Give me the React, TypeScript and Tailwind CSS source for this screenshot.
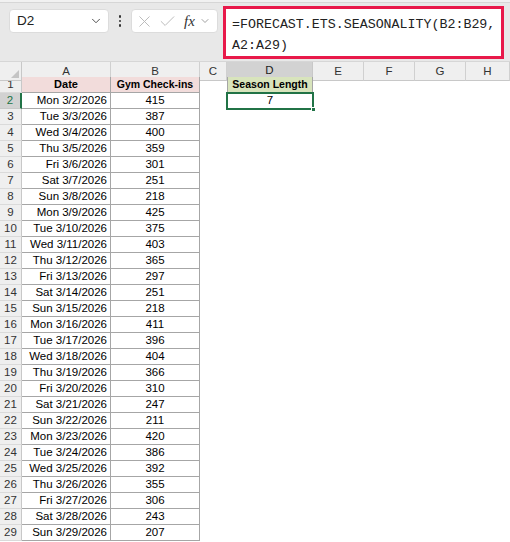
import { ChevronDown, X, Check } from 'lucide-react';

const rows: [string, number][] = [
  ['Mon 3/2/2026', 415],
  ['Tue 3/3/2026', 387],
  ['Wed 3/4/2026', 400],
  ['Thu 3/5/2026', 359],
  ['Fri 3/6/2026', 301],
  ['Sat 3/7/2026', 251],
  ['Sun 3/8/2026', 218],
  ['Mon 3/9/2026', 425],
  ['Tue 3/10/2026', 375],
  ['Wed 3/11/2026', 403],
  ['Thu 3/12/2026', 365],
  ['Fri 3/13/2026', 297],
  ['Sat 3/14/2026', 251],
  ['Sun 3/15/2026', 218],
  ['Mon 3/16/2026', 411],
  ['Tue 3/17/2026', 396],
  ['Wed 3/18/2026', 404],
  ['Thu 3/19/2026', 366],
  ['Fri 3/20/2026', 310],
  ['Sat 3/21/2026', 247],
  ['Sun 3/22/2026', 211],
  ['Mon 3/23/2026', 420],
  ['Tue 3/24/2026', 386],
  ['Wed 3/25/2026', 392],
  ['Thu 3/26/2026', 355],
  ['Fri 3/27/2026', 306],
  ['Sat 3/28/2026', 243],
  ['Sun 3/29/2026', 207],
];

const cols = ['A', 'B', 'C', 'D', 'E', 'F', 'G', 'H'];
const gridCols = 'grid grid-cols-[22px_89px_89px_27px_86px_51px_51px_51px_1fr]';

function RowHead({ n, active }: { n: number; active?: boolean }) {
  return (
    <div
      className={
        active
          ? 'h-4 bg-[#d2d2d2] border-r-2 border-r-[#217346] border-b border-b-[#c8c8c8] flex items-center justify-center text-[#217346]'
          : 'h-4 bg-[#efefef] border-r border-r-[#c8c8c8] border-b border-b-[#dadada] flex items-center justify-center text-[#333]'
      }
    >
      {n}
    </div>
  );
}

export default function App() {
  return (
    <div className="w-[510px] h-[542px] overflow-hidden bg-white font-['Liberation_Sans',Arial,sans-serif] text-[11.5px] text-black">
      {/* formula bar */}
      <div className="h-[61px] bg-[#e8e8e8] relative">
        <div className="h-[3px] bg-[#f1f1f1] border-b border-[#d6d6d6]" />
        <div className="flex items-start pt-[6px] pl-[9px]">
          <div className="w-[100px] h-[24px] bg-white rounded-[4px] border border-[#dcdcdc] flex items-center justify-between pl-[7px] pr-[5px]">
            <span className="text-[13.5px] text-[#222]">D2</span>
            <ChevronDown size={14} strokeWidth={1.6} className="text-[#444]" />
          </div>
          <div className="w-[22px] h-[24px] flex flex-col items-center justify-center gap-[2px]">
            <span className="w-[2.5px] h-[2.5px] bg-[#333] rounded-full" />
            <span className="w-[2.5px] h-[2.5px] bg-[#333] rounded-full" />
            <span className="w-[2.5px] h-[2.5px] bg-[#333] rounded-full" />
          </div>
          <div className="w-[87px] h-[24px] bg-white rounded-[4px] border border-[#dcdcdc] flex items-center pl-[3px] gap-[4px] text-[#b8b8b8]">
            <X size={19} strokeWidth={1.2} />
            <Check size={19} strokeWidth={1.2} />
            <span className="font-['Liberation_Serif',serif] italic text-[15px] text-[#333] ml-[3px]">fx</span>
            <ChevronDown size={12} strokeWidth={1.6} className="text-[#888]" />
          </div>
          <div className="ml-[5px] -mt-[3px] w-[281px] h-[53px] bg-white border-[3px] border-[#e8194a] pl-[6px] pt-[5px] font-['Liberation_Mono',monospace] text-[13.3px] leading-[21px] text-[#222]">
            <div>=FORECAST.ETS.SEASONALITY(B2:B29,</div>
            <div>A2:A29)</div>
          </div>
        </div>
      </div>

      {/* column headers */}
      <div className={`${gridCols} h-[16px] border-t border-[#d6d6d6]`}>
        <div className="bg-[#efefef] border-r border-b border-[#c8c8c8] relative">
          <svg width="8" height="8" className="absolute right-[2px] bottom-[2px]">
            <path d="M8 0 L8 8 L0 8 Z" fill="#c4c4c4" />
          </svg>
        </div>
        {cols.map((c) =>
          c === 'D' ? (
            <div
              key={c}
              className="bg-[#d2d2d2] border-r border-[#c8c8c8] border-b-2 border-b-[#217346] flex items-center justify-center text-[#222]"
            >
              {c}
            </div>
          ) : (
            <div
              key={c}
              className="bg-[#efefef] border-r border-r-[#d0d0d0] border-b border-b-[#c8c8c8] flex items-center justify-center text-[#333]"
            >
              {c}
            </div>
          ),
        )}
      </div>

      {/* row 1 */}
      <div className={gridCols}>
        <RowHead n={1} />
        <div className="h-4 bg-[#f2dcdb] border-r border-b border-[#a6a6a6] flex items-center justify-center font-bold text-[11px]">
          Date
        </div>
        <div className="h-4 bg-[#f2dcdb] border-r border-b border-[#a6a6a6] flex items-center justify-center font-bold text-[10.5px]">
          Gym Check-ins
        </div>
        <div />
        <div className="h-4 bg-[#d8e4bc] border-x border-b border-[#a6a6a6] flex items-center justify-center font-bold text-[10.5px]">
          Season Length
        </div>
        <div />
      </div>

      {/* data rows */}
      {rows.map(([date, count], i) => (
        <div key={date} className={gridCols}>
          <RowHead n={i + 2} active={i === 0} />
          <div className="h-4 border-r border-b border-[#a6a6a6] flex items-center justify-end pr-[3px]">
            {date}
          </div>
          <div className="h-4 border-r border-b border-[#a6a6a6] flex items-center justify-center">{count}</div>
          <div />
          {i === 0 ? (
            <div className="h-4 relative flex items-center justify-center">
              7
              <div className="absolute -left-[1px] -right-[1px] -top-[1px] bottom-[-1px] border-2 border-[#217346]" />
              <div className="absolute -right-[3px] -bottom-[3px] w-[5px] h-[5px] bg-[#217346] border border-white" />
            </div>
          ) : (
            <div />
          )}
        </div>
      ))}
    </div>
  );
}
